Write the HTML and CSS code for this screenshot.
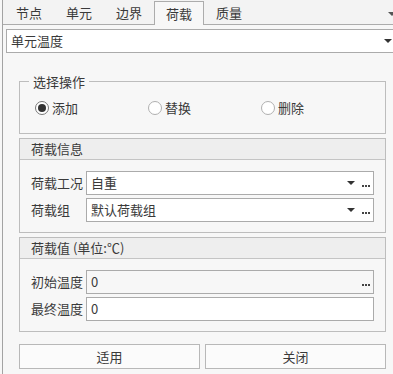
FILE: index.html
```html
<!DOCTYPE html>
<html lang="zh">

<head>
    <meta charset="UTF-8">
    <meta name="viewport" content="width=device-width, initial-scale=1.0">
    <title>单元温度</title>
    <link rel="stylesheet" href="styles.css">
</head>

<body>
    <div class="app">
        <div class="tabs">
            <div class="tab">节点</div>
            <div class="tab">单元</div>
            <div class="tab">边界</div>
            <div class="tab active">荷载</div>
            <div class="tab">质量</div>
            <span class="tab_more"></span>
        </div>

        <div class="combo">
            <span>单元温度</span>
            <span class="arrow"></span>
        </div>

        <div class="group">
            <div class="legend">选择操作</div>
            <div class="radios">
                <label class="radio checked"><span class="circle"></span>添加</label>
                <label class="radio"><span class="circle"></span>替换</label>
                <label class="radio"><span class="circle"></span>删除</label>
            </div>
        </div>

        <div class="panel">
            <div class="panel_head">荷载信息</div>
            <div class="panel_body">
                <div class="row">
                    <span class="label">荷载工况</span>
                    <div class="field">
                        <span class="value">自重</span>
                        <span class="arrow"></span>
                        <span class="dots"><i></i><i></i><i></i></span>
                    </div>
                </div>
                <div class="row">
                    <span class="label">荷载组</span>
                    <div class="field">
                        <span class="value">默认荷载组</span>
                        <span class="arrow"></span>
                        <span class="dots"><i></i><i></i><i></i></span>
                    </div>
                </div>
            </div>
        </div>

        <div class="panel">
            <div class="panel_head">荷载值 (单位:℃)</div>
            <div class="panel_body">
                <div class="row">
                    <span class="label">初始温度</span>
                    <div class="field readonly">
                        <span class="value">0</span>
                        <span class="dots"><i></i><i></i><i></i></span>
                    </div>
                </div>
                <div class="row">
                    <span class="label">最终温度</span>
                    <div class="field">
                        <span class="value">0</span>
                    </div>
                </div>
            </div>
        </div>

        <div class="buttons">
            <button class="btn">适用</button>
            <button class="btn">关闭</button>
        </div>
    </div>
</body>

</html>
```

FILE: styles.css
```css
* {
    box-sizing: border-box;
}

body {
    margin: 0;
    padding: 0;
    background-color: #f7f7f7;
    font-family: "Noto Sans CJK SC", "Noto Sans", sans-serif;
    font-size: 13px;
    line-height: 18px;
    color: #3a3a3a;
    overflow: hidden;
}

.app {
    margin-left: 2px;
    border-left: 1px solid #a3a3a3;
    min-height: 100vh;
    background-color: #f7f7f7;
}

/* tab strip */
.tabs {
    display: flex;
    align-items: flex-start;
    height: 25px;
    padding-left: 1px;
    border-bottom: 1px solid #acacac;
    background-color: #f3f3f3;
}

.tab {
    width: 50px;
    height: 24px;
    line-height: 25px;
    text-align: center;
}

.tab.active {
    margin-top: 1px;
    height: 24px;
    line-height: 23px;
    border: 1px solid #acacac;
    border-bottom: none;
    background-color: #f7f7f7;
}

.tab_more {
    margin-left: auto;
    margin-top: 12px;
    margin-right: -3px;
    width: 0;
    height: 0;
    border-left: 4px solid transparent;
    border-right: 4px solid transparent;
    border-top: 4px solid #555;
}

.arrow {
    width: 0;
    height: 0;
    border-left: 4px solid transparent;
    border-right: 4px solid transparent;
    border-top: 4px solid #333;
}

/* element type combo */
.combo {
    display: flex;
    align-items: center;
    margin: 4px 0 0 3px;
    height: 24px;
    padding-left: 4px;
    border: 1px solid #ababab;
    border-right: none;
    background-color: #fff;
}

.combo .arrow {
    margin-left: auto;
    margin-right: 1px;
}

/* operation group */
.group {
    margin: 28px 7px 0 16px;
    border: 1px solid #bdbdbd;
    padding-bottom: 16px;
}

.legend {
    width: fit-content;
    margin-top: -9px;
    margin-left: 9px;
    padding: 0 4px;
    line-height: 18px;
    background-color: #f7f7f7;
}

.radios {
    display: flex;
    margin-top: 8px;
    padding-left: 15px;
}

.radio {
    display: flex;
    align-items: center;
    width: 113px;
    height: 18px;
}

.circle {
    display: flex;
    align-items: center;
    justify-content: center;
    width: 14px;
    height: 14px;
    margin-right: 3px;
    border: 1px solid #b0b0b0;
    border-radius: 50%;
    background-color: #fff;
}

.radio.checked .circle {
    border-color: #777;
}

.radio.checked .circle::after {
    content: "";
    width: 8px;
    height: 8px;
    border-radius: 50%;
    background-color: #333;
}

/* panels */
.panel {
    margin: 4px 7px 0 16px;
    border: 1px solid #bdbdbd;
}

.panel_head {
    height: 21px;
    line-height: 20px;
    padding-left: 11px;
    border-bottom: 1px solid #c4c4c4;
    background-color: #eeeeee;
}

.panel_body {
    display: flex;
    flex-direction: column;
    gap: 3px;
    padding: 11px 11px 10px 11px;
}

.row {
    display: flex;
    align-items: center;
    height: 24px;
}

.label {
    width: 55px;
    flex-shrink: 0;
}

.field {
    flex: 1;
    display: flex;
    align-items: center;
    height: 24px;
    padding: 0 3px 0 4px;
    border: 1px solid #ababab;
    background-color: #fff;
}

.field.readonly {
    background-color: #f7f7f7;
}

.field .value {
    flex: 1;
}

.dots {
    display: flex;
    gap: 1px;
    margin-left: 7px;
    margin-top: 5px;
}

.dots i {
    width: 2px;
    height: 2px;
    background-color: #444;
}

/* bottom buttons */
.buttons {
    display: flex;
    gap: 5px;
    margin: 12px 7px 0 16px;
}

.btn {
    flex: 1;
    height: 25px;
    border: 1px solid #b8b8b8;
    background-color: #fbfbfb;
    font-family: inherit;
    font-size: 13px;
    color: #3a3a3a;
    padding: 0;
}
```
